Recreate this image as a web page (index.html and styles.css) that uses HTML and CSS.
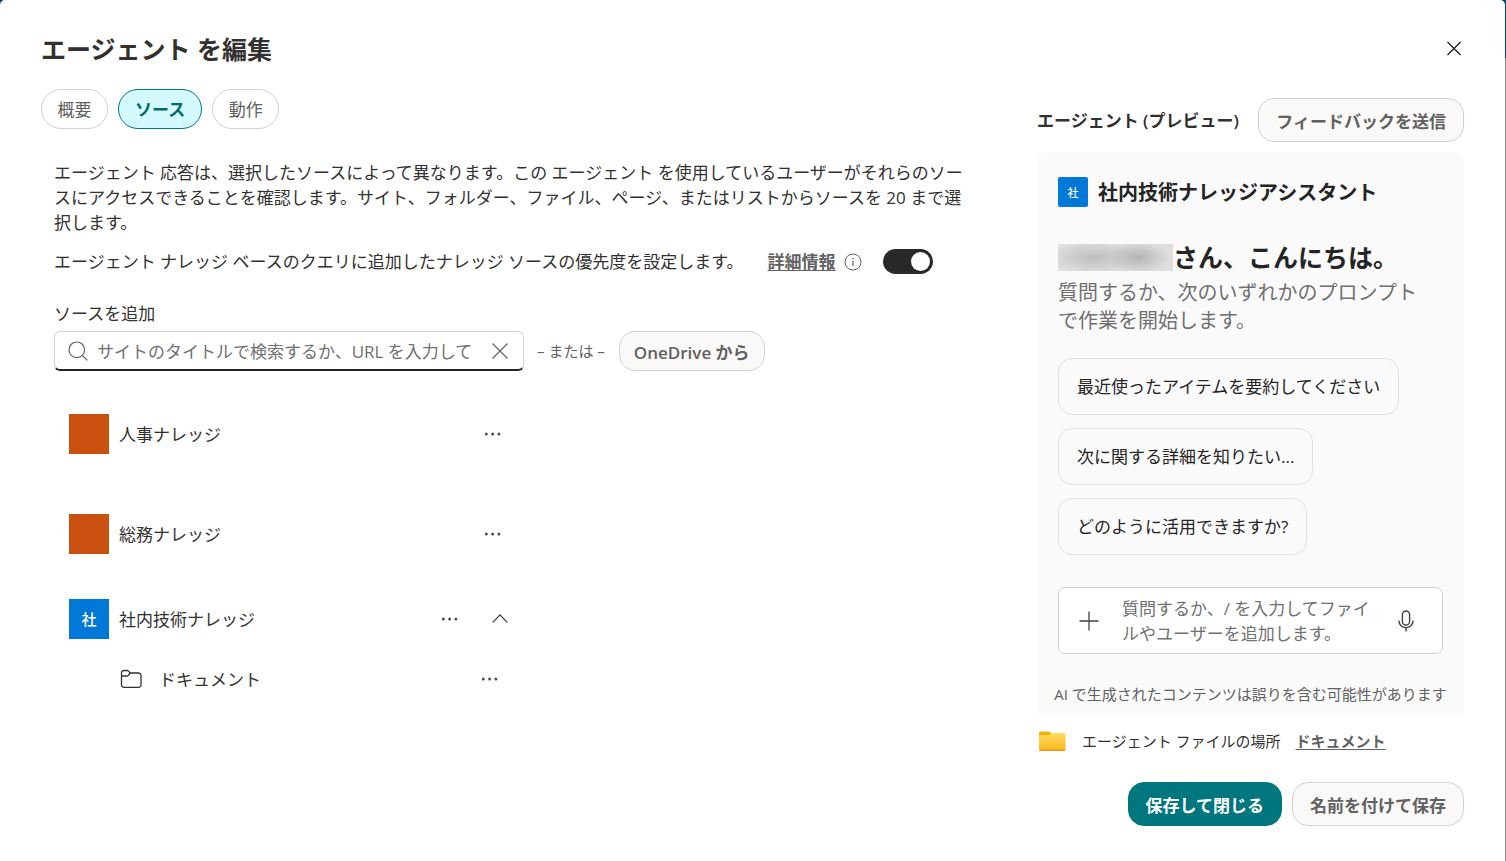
FILE: index.html
```html
<!DOCTYPE html>
<html lang="ja">
<head>
    <meta charset="UTF-8">
    <meta name="viewport" content="width=device-width, initial-scale=1.0">
    <title>エージェント を編集</title>
    <link rel="stylesheet" href="styles.css">
</head>

<body>
    <div class="dialog">
        <header class="header">
            <h1>エージェント を編集</h1>
            <button class="icon_btn" type="button" aria-label="閉じる">
                <svg width="16" height="16" viewBox="0 0 16 16"><path d="M1.500 1l13 13M14.500 1l-13 13" stroke="#242424" stroke-width="1.4"/></svg>
            </button>
        </header>
        <div class="content">
            <main class="main">
                <nav class="tab_list">
                    <button type="button">概要</button>
                    <button type="button" class="current">ソース</button>
                    <button type="button">動作</button>
                </nav>
                <div class="source">
                    <p class="desc">エージェント 応答は、選択したソースによって異なります。この エージェント を使用しているユーザーがそれらのソースにアクセスできることを確認します。サイト、フォルダー、ファイル、ページ、またはリストからソースを 20 まで選択します。</p>
                    <div class="priority">
                        <label for="priority">エージェント ナレッジ ベースのクエリに追加したナレッジ ソースの優先度を設定します。</label>
                        <a href="#">詳細情報</a>
                        <svg width="18" height="18" viewBox="0 0 18 18" fill="none" stroke="#616161"><circle cx="9" cy="9" r="8"/><path d="M9 8v5" stroke-width="1.2"/><circle cx="9" cy="5.7" r=".8" fill="#616161" stroke="none"/></svg>
                        <input class="switch" id="priority" type="checkbox" checked>
                    </div>
                    <label class="add_label" for="search">ソースを追加</label>
                    <div class="add">
                        <div class="search">
                            <svg width="20" height="20" viewBox="0 0 20 20" fill="none" stroke="#616161" stroke-width="1.2"><circle cx="8.8" cy="8.8" r="7.8"/><path d="M14.3 14.3l5 5"/></svg>
                            <input id="search" type="text" placeholder="サイトのタイトルで検索するか、URL を入力してください">
                            <button class="icon_btn" type="button" aria-label="クリア">
                                <svg width="16" height="16" viewBox="0 0 16 16"><path d="M.5 .5l15 15M15.5 .5l-15 15" stroke="#616161" stroke-width="1.2"/></svg>
                            </button>
                        </div>
                        <span class="or">– または –</span>
                        <button class="btn btn_small" type="button">OneDrive から</button>
                    </div>
                    <ul class="source_list">
                        <li class="site">
                            <span class="logo"></span>
                            <span class="name">人事ナレッジ</span>
                            <button class="icon_btn" type="button" aria-label="その他">
                                <svg width="18" height="4" viewBox="0 0 18 4" fill="#505050"><circle cx="2.3" cy="2" r="1.5"/><circle cx="8.6" cy="2" r="1.5"/><circle cx="14.9" cy="2" r="1.5"/></svg>
                            </button>
                        </li>
                        <li class="site">
                            <span class="logo"></span>
                            <span class="name">総務ナレッジ</span>
                            <button class="icon_btn" type="button" aria-label="その他">
                                <svg width="18" height="4" viewBox="0 0 18 4" fill="#505050"><circle cx="2.3" cy="2" r="1.5"/><circle cx="8.6" cy="2" r="1.5"/><circle cx="14.9" cy="2" r="1.5"/></svg>
                            </button>
                        </li>
                        <li class="site open">
                            <span class="logo blue">社</span>
                            <span class="name">社内技術ナレッジ</span>
                            <button class="icon_btn" type="button" aria-label="その他">
                                <svg width="18" height="4" viewBox="0 0 18 4" fill="#505050"><circle cx="2.3" cy="2" r="1.5"/><circle cx="8.6" cy="2" r="1.5"/><circle cx="14.9" cy="2" r="1.5"/></svg>
                            </button>
                            <button class="icon_btn" type="button" aria-label="折りたたむ">
                                <svg width="16" height="10" viewBox="0 0 16 10" fill="none" stroke="#333" stroke-width="1.2"><path d="M.8 8.3L8 .9l7.2 7.4"/></svg>
                            </button>
                        </li>
                        <li class="folder">
                            <svg width="22" height="20" viewBox="0 0 22 20" fill="none" stroke="#323130" stroke-width="1.3"><path d="M1.500 4a2.500 2.500 0 0 1 2.500-2.500h3.200q.8 0 1.300.6L10.200 4H18.500a2.500 2.500 0 0 1 2.500 2.500V16a2.300 2.300 0 0 1-2.300 2.300H3.800A2.300 2.300 0 0 1 1.500 16zM1.500 7h5.600q.8 0 1.300-.6L10.200 4"/></svg>
                            <span class="name">ドキュメント</span>
                            <button class="icon_btn" type="button" aria-label="その他">
                                <svg width="18" height="4" viewBox="0 0 18 4" fill="#505050"><circle cx="2.3" cy="2" r="1.5"/><circle cx="8.6" cy="2" r="1.5"/><circle cx="14.9" cy="2" r="1.5"/></svg>
                            </button>
                        </li>
                    </ul>
                </div>
            </main>
            <aside class="side">
                <div class="side_top">
                    <h2>エージェント (プレビュー)</h2>
                    <button class="btn" type="button">フィードバックを送信</button>
                </div>
                <section class="preview">
                    <div class="agent">
                        <span class="logo blue">社</span>
                        <h3>社内技術ナレッジアシスタント</h3>
                    </div>
                    <div class="hello">
                        <span class="user"></span>
                        <strong>さん、こんにちは。</strong>
                    </div>
                    <p class="guide">質問するか、次のいずれかのプロンプトで作業を開始します。</p>
                    <div class="prompts">
                        <button type="button">最近使ったアイテムを要約してください</button>
                        <button type="button">次に関する詳細を知りたい...</button>
                        <button type="button">どのように活用できますか?</button>
                    </div>
                    <div class="chat">
                        <button class="icon_btn" type="button" aria-label="追加">
                            <svg width="20" height="20" viewBox="0 0 20 20"><path d="M10 .5v19M.5 10h19" stroke="#424242" stroke-width="1.3"/></svg>
                        </button>
                        <textarea rows="2" aria-label="メッセージ" placeholder="質問するか、/ を入力してファイルやユーザーを追加します。"></textarea>
                        <button class="icon_btn" type="button" aria-label="マイク">
                            <svg width="16" height="22" viewBox="0 0 16 22" fill="none" stroke="#424242" stroke-width="1.4"><rect x="4.4" y="1" width="7.2" height="14" rx="3.6"/><path d="M1 10.5v.8a7 6.3 0 0 0 14 0v-.8M8 17.600V21.500"/></svg>
                        </button>
                    </div>
                    <p class="note">AI で生成されたコンテンツは誤りを含む可能性があります</p>
                </section>
                <div class="place">
                    <svg width="28" height="20" viewBox="0 0 28 20">
                        <defs>
                            <linearGradient id="folder" x1="0" y1="0" x2="0" y2="1"><stop offset="0" stop-color="#ffdc62"/><stop offset="1" stop-color="#ffb41c"/></linearGradient>
                        </defs>
                        <path d="M1 2q0-1.500 1.500-1.500h8q1 0 1.700.8L13.500 3v4H1z" fill="#f0b400"/>
                        <path d="M1 4h10l2.500-2H26q1.500 0 1.500 1.500v14.700q0 1.500-1.500 1.500H2.500Q1 19.700 1 18.200z" fill="url(#folder)"/>
                        <path d="M1.500 19.300h25.500" stroke="#d98613"/>
                    </svg>
                    <span>エージェント ファイルの場所</span>
                    <a href="#">ドキュメント</a>
                </div>
                <div class="footer">
                    <button class="btn primary" type="button">保存して閉じる</button>
                    <button class="btn" type="button">名前を付けて保存</button>
                </div>
            </aside>
        </div>
    </div>
</body>
</html>
```
FILE: styles.css
```css
* {
    margin: 0;
    padding: 0;
    box-sizing: border-box;
}

body {
    background: linear-gradient(#004578 58px, #8a8886 58px);
    color: #323130;
    font: 17px/25px "Open Sans", "Noto Sans CJK JP", sans-serif;
}

button,
input,
textarea {
    font: inherit;
    color: inherit;
}

button {
    cursor: pointer;
}

svg {
    display: block;
    flex: none;
}

li {
    list-style-type: none;
}

a {
    color: #616161;
    font-weight: 600;
    text-underline-offset: 2px;
}

.dialog {
    min-height: 100vh;
    margin-right: 1px;
    padding: 30px 41px 35px;
    border-radius: 5px 5px 0 0;
    background-color: #fff;
}

.header {
    display: flex;
    align-items: center;
    justify-content: space-between;
    height: 38px;
}

.header h1 {
    font-size: 25px;
    font-weight: 700;
}

.icon_btn {
    display: flex;
    flex: none;
    align-items: center;
    justify-content: center;
    width: 20px;
    height: 24px;
    border: 0;
    background: none;
}

.content {
    display: flex;
    justify-content: space-between;
    gap: 40px;
    padding-top: 21px;
}

.main {
    flex: 1;
    min-width: 0;
}

.tab_list {
    display: flex;
    gap: 10px;
}

.tab_list button {
    height: 40px;
    min-width: 67px;
    padding: 0 15px;
    border: 1px solid #d1d1d1;
    border-radius: 20px;
    background-color: #fff;
    color: #616161;
}

.tab_list .current {
    padding: 0 16px;
    border-color: #00767f;
    background-color: #d4faff;
    color: #006a71;
    font-weight: 700;
}

.source {
    padding: 31px 0 0 13px;
}

.desc {
    max-width: 924px;
}

.priority {
    display: flex;
    align-items: center;
    height: 25px;
    margin-top: 14px;
}

.priority a {
    margin: 0 8px 0 24px;
}

/* 優先度のスイッチ */
.switch {
    display: flex;
    align-items: center;
    justify-content: flex-end;
    width: 50px;
    height: 25px;
    margin-left: 21px;
    padding: 0 3px;
    border-radius: 13px;
    background-color: #292827;
    appearance: none;
}

.switch::before {
    content: "";
    width: 19px;
    height: 19px;
    border-radius: 50%;
    background-color: #fff;
}

.add_label {
    display: block;
    margin-top: 27px;
}

.add {
    display: flex;
    align-items: center;
    margin-top: 5px;
}

.search {
    display: flex;
    align-items: center;
    width: 470px;
    height: 40px;
    padding: 0 13px;
    border: 1px solid #d1d1d1;
    border-bottom: 2px solid #242424;
    border-radius: 6px;
}

.search input {
    flex: 1;
    min-width: 0;
    margin: 0 16px 0 9px;
    padding-top: 2px;
    border: 0;
    outline: 0;
    background: none;
}

::placeholder {
    color: #707070;
    opacity: 1;
}

.or {
    padding: 0 14px 0 13px;
    color: #616161;
    font-size: 15px;
}

.btn {
    height: 44px;
    padding: 2px 17px 0;
    border: 1px solid #d1d1d1;
    border-radius: 16px;
    background-color: #faf9f8;
    color: #616161;
    font-weight: 600;
    white-space: nowrap;
}

.btn_small {
    height: 40px;
    padding: 2px 14px 0;
}

.primary {
    border-color: #00767f;
    background-color: #00767f;
    color: #fff;
}

.source_list {
    width: 460px;
    margin-top: 13px;
    padding-left: 15px;
}

.site,
.folder {
    display: flex;
    align-items: center;
}

.site {
    height: 100px;
    padding-right: 11px;
}

.site.open {
    gap: 30px;
    height: 70px;
    padding-right: 4px;
}

.folder {
    height: 50px;
    padding: 0 14px 0 51px;
}

.logo {
    display: flex;
    flex: none;
    align-items: center;
    justify-content: center;
    width: 40px;
    height: 40px;
    background-color: #ca5010;
    color: #fff;
    font-size: 15px;
    font-weight: 500;
}

.logo.blue {
    background-color: #0078d7;
}

.name {
    flex: 1;
    padding-left: 10px;
}

.open .name {
    margin-left: -30px;
}

.folder .name {
    padding-left: 17px;
}

.side {
    flex: none;
    width: 427px;
    padding-top: 9px;
}

.side_top {
    display: flex;
    align-items: center;
    justify-content: space-between;
}

.side_top h2 {
    font-size: 17px;
    font-weight: 600;
    white-space: nowrap;
}

.preview {
    margin-top: 10px;
    padding: 25px 21px 6px;
    border-radius: 8px 8px 0 0;
    background-color: #fafafa;
}

.agent {
    display: flex;
    align-items: center;
    gap: 10px;
}

.agent .logo {
    width: 30px;
    height: 30px;
    border-radius: 2px;
    font-size: 11px;
}

.agent h3 {
    color: #242424;
    font-size: 20px;
    font-weight: 600;
}

.hello {
    display: flex;
    align-items: center;
    height: 35px;
    margin-top: 33px;
    color: #242424;
    font-size: 25px;
}

/* ユーザー名はぼかして表示 */
.user {
    width: 115px;
    height: 27px;
    background:
        radial-gradient(ellipse 30px 16px at 70% 50%, #b4b4b4, transparent),
        radial-gradient(ellipse 44px 16px at 32% 50%, #bebebe, transparent),
        #dedede;
}

.guide {
    margin-top: 4px;
    padding-right: 20px;
    color: #707070;
    font-size: 20px;
    line-height: 28px;
}

.prompts {
    display: flex;
    flex-direction: column;
    align-items: flex-start;
    gap: 13px;
    margin-top: 23px;
}

.prompts button {
    height: 57px;
    padding: 0 18px;
    border: 1px solid #e0e0e0;
    border-radius: 14px;
    background-color: #fafafa;
    color: #242424;
}

.chat {
    display: flex;
    align-items: center;
    margin-top: 32px;
    padding: 8px 26px 7px 20px;
    border: 1px solid #d1d1d1;
    border-radius: 7px;
    background-color: #fff;
}

.chat textarea {
    flex: 1;
    min-width: 0;
    margin: 0 18px 0 23px;
    border: 0;
    outline: 0;
    background: none;
    resize: none;
    overflow: hidden;
}

.note {
    margin: 28px -10px 0;
    color: #616161;
    font-size: 15px;
    text-align: center;
    white-space: nowrap;
}

.place {
    display: flex;
    align-items: center;
    height: 56px;
    padding-left: 1px;
    font-size: 15px;
}

.place span {
    margin: 0 15px 0 16px;
}

.footer {
    display: flex;
    justify-content: flex-end;
    gap: 10px;
    margin-top: 13px;
}
```
